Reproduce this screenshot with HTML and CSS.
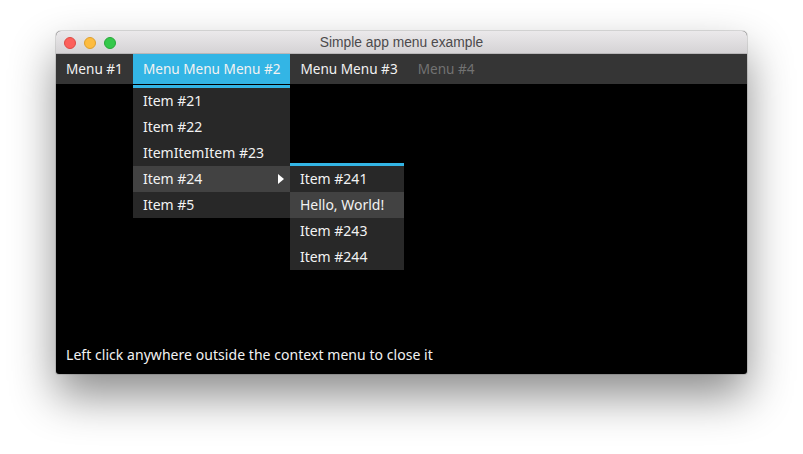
FILE: index.html
```html
<!DOCTYPE html>
<html>
<head>
<meta charset="utf-8">
<link rel="stylesheet" href="styles.css">
</head>
<body>
<div class="window">
  <div class="titlebar">
    <div class="lights">
      <span class="light red"></span>
      <span class="light yellow"></span>
      <span class="light green"></span>
    </div>
    <div class="title">Simple app menu example</div>
  </div>
  <div class="menubar">
    <div class="menu">Menu #1</div>
    <div class="menu active">Menu Menu Menu #2
      <div class="dropdown">
        <div class="item">Item #21</div>
        <div class="item">Item #22</div>
        <div class="item">ItemItemItem #23</div>
        <div class="item hover has-sub">Item #24
          <span class="arrow"></span>
          <div class="dropdown submenu">
            <div class="item">Item #241</div>
            <div class="item hover">Hello, World!</div>
            <div class="item">Item #243</div>
            <div class="item">Item #244</div>
          </div>
        </div>
        <div class="item">Item #5</div>
      </div>
    </div>
    <div class="menu">Menu Menu #3</div>
    <div class="menu disabled">Menu #4</div>
  </div>
  <div class="content">
    <div class="hint">Left click anywhere outside the context menu to close it</div>
  </div>
</div>
</body>
</html>
```

FILE: styles.css
```css
html, body {
  margin: 0;
  padding: 0;
  background: #ffffff;
}
body {
  padding: 31px 0 0 56px;
  height: 454px;
  box-sizing: border-box;
  overflow: hidden;
}
.window {
  width: 691px;
  height: 343px;
  display: flex;
  flex-direction: column;
  border-radius: 5px 5px 3px 3px;
  box-shadow: 0 0 0 1px rgba(0,0,0,0.12), 0 22px 45px rgba(0,0,0,0.45);
  font-family: "Noto Sans", "Open Sans", sans-serif;
  font-size: 14px;
  color: #f2f2f2;
  background: #000;
}
.titlebar {
  height: 23px;
  flex: none;
  display: flex;
  align-items: center;
  position: relative;
  background: linear-gradient(#ebe9eb, #d5d3d5);
  border-radius: 5px 5px 0 0;
  border-bottom: 1px solid #b9b7b9;
  box-sizing: border-box;
}
.lights {
  display: flex;
  gap: 8px;
  padding-left: 8px;
  padding-top: 1px;
}
.light {
  width: 12px;
  height: 12px;
  border-radius: 50%;
  box-sizing: border-box;
}
.red { background: #fc605b; border: 1px solid #de4a44; }
.yellow { background: #fdbc40; border: 1px solid #de9f2d; }
.green { background: #34c84a; border: 1px solid #27a838; }
.title {
  position: absolute;
  left: 0;
  right: 0;
  top: 1px;
  bottom: 0;
  display: flex;
  align-items: center;
  justify-content: center;
  font-family: "Liberation Sans", Arial, sans-serif;
  font-size: 13.8px;
  color: #4c4a4c;
}
.menubar {
  height: 30px;
  flex: none;
  display: flex;
  background: #353535;
}
.menu {
  padding: 0 10px 1px;
  display: flex;
  align-items: center;
  position: relative;
  white-space: nowrap;
  font-size: 13.6px;
}
.menu.active {
  background: #33b5e5;
}
.menu.disabled {
  color: #727272;
}
.dropdown {
  position: absolute;
  left: 0;
  top: 31px;
  width: 157px;
  background: #282828;
  border-top: 3px solid #33b5e5;
  z-index: 2;
  font-size: 14px;
}
.item {
  height: 26px;
  box-sizing: border-box;
  padding-bottom: 1px;
  display: flex;
  align-items: center;
  padding-left: 10px;
  position: relative;
  white-space: nowrap;
}
.item.hover {
  background: #424242;
}
.arrow {
  position: absolute;
  right: 6px;
  top: 8px;
  width: 0;
  height: 0;
  border-top: 5px solid transparent;
  border-bottom: 5px solid transparent;
  border-left: 6px solid #ffffff;
}
.submenu {
  left: 157px;
  top: -3px;
  width: 114px;
}
.content {
  flex: 1;
  display: flex;
  flex-direction: column;
  justify-content: flex-end;
  padding: 0 10px 9px;
  border-radius: 0 0 3px 3px;
}
.hint {
  line-height: 20px;
  letter-spacing: 0.05px;
}
```
